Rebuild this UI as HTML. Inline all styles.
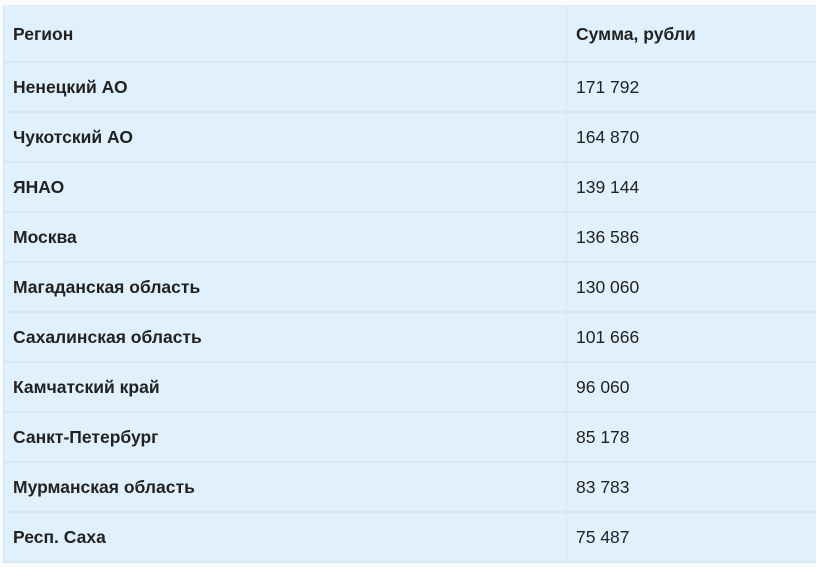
<!DOCTYPE html>
<html><head><meta charset="utf-8"><style>
body{margin:0;background:#f9fcfd;width:816px;height:567px;overflow:hidden;font-family:"Liberation Sans",Arial,sans-serif;color:#222;}
.t{position:absolute;left:3px;top:5px;width:820px;background:#e0f1fd;border-top:2px solid #e3edf3;border-left:1px solid #d8e4ec;}
.r{height:48px;border-bottom:2px solid #d8e7f1;position:relative;font-size:17.5px;}
.r.h{height:54px}
.r div{position:absolute;top:0;bottom:0;display:flex;align-items:center}
.a{left:9px;font-weight:bold}
.b{left:562px;padding-left:9px;border-left:1px solid #d8e4ec;width:250px}
.h .b{font-weight:bold}
</style></head><body>
<div class="t">
<div class="r h"><div class="a">Регион</div><div class="b">Сумма, рубли</div></div>
<div class="r"><div class="a">Ненецкий АО</div><div class="b">171 792</div></div>
<div class="r"><div class="a">Чукотский АО</div><div class="b">164 870</div></div>
<div class="r"><div class="a">ЯНАО</div><div class="b">139 144</div></div>
<div class="r"><div class="a">Москва</div><div class="b">136 586</div></div>
<div class="r"><div class="a">Магаданская область</div><div class="b">130 060</div></div>
<div class="r"><div class="a">Сахалинская область</div><div class="b">101 666</div></div>
<div class="r"><div class="a">Камчатский край</div><div class="b">96 060</div></div>
<div class="r"><div class="a">Санкт-Петербург</div><div class="b">85 178</div></div>
<div class="r"><div class="a">Мурманская область</div><div class="b">83 783</div></div>
<div class="r"><div class="a">Респ. Саха</div><div class="b">75 487</div></div>
</div>
</body></html>
